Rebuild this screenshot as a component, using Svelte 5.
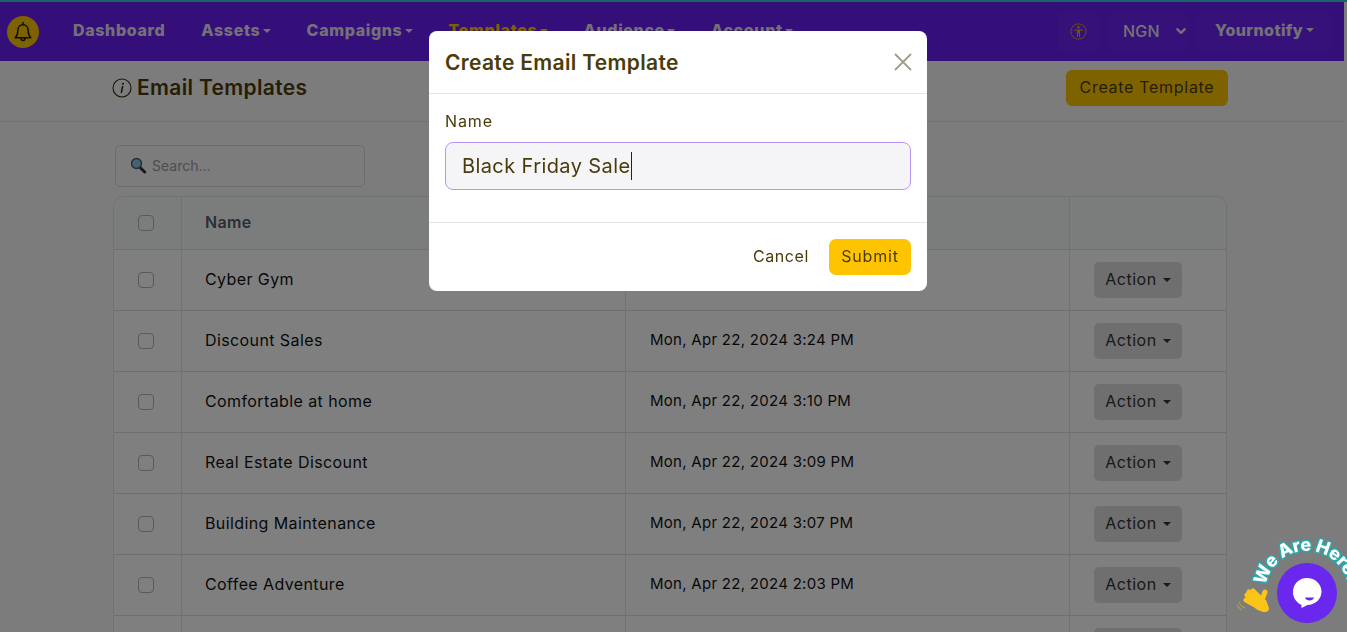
<script>
  const navItems = [
    { label: 'Dashboard', caret: false },
    { label: 'Assets', caret: true },
    { label: 'Campaigns', caret: true },
    { label: 'Templates', caret: true, active: true },
    { label: 'Audience', caret: true },
    { label: 'Account', caret: true }
  ];

  const templates = [
    { name: 'Cyber Gym', date: 'Mon, Apr 22, 2024 3:30 PM' },
    { name: 'Discount Sales', date: 'Mon, Apr 22, 2024 3:24 PM' },
    { name: 'Comfortable at home', date: 'Mon, Apr 22, 2024 3:10 PM' },
    { name: 'Real Estate Discount', date: 'Mon, Apr 22, 2024 3:09 PM' },
    { name: 'Building Maintenance', date: 'Mon, Apr 22, 2024 3:07 PM' },
    { name: 'Coffee Adventure', date: 'Mon, Apr 22, 2024 2:03 PM' },
    { name: 'Summer Deals', date: 'Mon, Apr 22, 2024 1:58 PM' }
  ];
</script>

<div class="page">
  <div class="topline"></div>
  <nav class="navbar">
    <div class="bell">
      <svg width="22" height="22" viewBox="0 0 24 24" fill="none" stroke="#1f1a08" stroke-width="1.6" stroke-linejoin="round" stroke-linecap="round">
        <path d="M12 1.500v2.600M12 4.100c-3.600 0-5.600 2.700-5.600 6 0 4.600-1 6.400-2.900 8.200h17c-1.900-1.800-2.900-3.600-2.900-8.200 0-3.300-2-6-5.600-6z" />
        <path d="M9.800 18.500c0 1.500 1 2.700 2.200 2.700s2.200-1.200 2.200-2.700" />
      </svg>
    </div>
    <ul class="menu">
      {#each navItems as item}
        <li class:active={item.active}>
          {item.label}
          {#if item.caret}<span class="caret"></span>{/if}
        </li>
      {/each}
    </ul>
    <div class="nav-right">
      <div class="chip access">
        <svg width="17" height="17" viewBox="0 0 24 24" fill="none" stroke="#e0ac00" stroke-width="1.300">
          <circle cx="12" cy="12" r="10.800" />
          <circle cx="12" cy="6" r="1.800" fill="#e0ac00" stroke="none" />
          <path d="M5.500 9h13v1.600h-4.300v9h-1.500v-4.800h-1.400v4.800H9.800v-9H5.500z" fill="#e0ac00" stroke="none" />
        </svg>
      </div>
      <div class="chip currency">
        NGN
        <svg width="12" height="12" viewBox="0 0 16 16" fill="none" stroke="#e6e3ef" stroke-width="3" stroke-linecap="round" stroke-linejoin="round">
          <path d="M3 5.500l5 5 5-5" />
        </svg>
      </div>
      <div class="chip account">Yournotify <span class="caret"></span></div>
    </div>
  </nav>

  <header class="subhead">
    <h1>
      <svg width="20" height="20" viewBox="0 0 20 20" fill="none" stroke="#2e2508" stroke-width="1.100">
        <circle cx="10" cy="10" r="9" />
        <path d="M10.600 8.500l-1.200 5.800" stroke-width="1.500" stroke-linecap="round" />
        <circle cx="11" cy="5.800" r="1" fill="#2e2508" stroke="none" />
      </svg>
      Email Templates
    </h1>
    <button class="create">Create Template</button>
  </header>

  <section class="content">
    <div class="search">
      <svg width="17" height="17" viewBox="0 0 17 17">
        <path d="M9.500 10l5.200 5" stroke="#333" stroke-width="3" stroke-linecap="round" />
        <circle cx="6.500" cy="6.500" r="5" fill="#8fc0e4" stroke="#4d5a66" stroke-width="1.400" />
      </svg>
      <span>Search...</span>
    </div>

    <div class="table">
      <div class="row head">
        <div class="cell check"><span class="box"></span></div>
        <div class="cell name">Name</div>
        <div class="cell date">Date</div>
        <div class="cell action"></div>
      </div>
      {#each templates as t}
        <div class="row">
          <div class="cell check"><span class="box"></span></div>
          <div class="cell name">{t.name}</div>
          <div class="cell date">{t.date}</div>
          <div class="cell action">
            <button class="action-btn">Action <span class="caret"></span></button>
          </div>
        </div>
      {/each}
    </div>
  </section>
</div>

<div class="backdrop"></div>

<div class="modal">
  <div class="modal-head">
    <h2>Create Email Template</h2>
    <svg class="close" width="18" height="18" viewBox="0 0 18 18" stroke="#a29d88" stroke-width="1.800" stroke-linecap="round">
      <path d="M1.500 1.500l15 15M16.500 1.500l-15 15" />
    </svg>
  </div>
  <div class="modal-body">
    <div class="label">Name</div>
    <div class="input">Black Friday Sale<span class="cursor"></span></div>
  </div>
  <div class="modal-foot">
    <button class="cancel">Cancel</button>
    <button class="submit">Submit</button>
  </div>
</div>

<div class="widget">
  <svg class="arc" width="120" height="107" viewBox="0 0 120 107">
    <defs>
      <path id="arc" d="M38.600 60.700A42 42 0 0 1 122 68" />
    </defs>
    <text class="arc-text"><textPath href="#arc">We Are Here!</textPath></text>
  </svg>
  <svg class="hand" width="40" height="30" viewBox="0 0 40 30">
    <g fill="none" stroke="#fcc419" stroke-width="5" stroke-linecap="round">
      <path d="M12 10l10 7M11 15l9 5M14 7l9 7M18 6l7 7M30 7l-3 8" />
    </g>
    <path d="M16 17l9-5 6 3 3 8c0 3-2 4-4 4-3 0-8-2-10-4z" fill="#fcc419" />
    <path d="M4 17c1 3 3 5 6 6M2 20c1 2 3 4 5 5" fill="none" stroke="#c9a93a" stroke-width="1" />
  </svg>
  <div class="bubble">
    <svg width="30" height="32" viewBox="0 0 30 32">
      <path d="M15 1C6.800 1 1 7.300 1 15c0 5.800 3.400 10.700 8.400 12.800L9.500 31l6-3c8-.2 14-6 14-13.500C29.500 7 23 1 15 1z" fill="#fff" />
      <path d="M13 20.500h9c-.6 2-2.300 3-4.500 3s-3.900-1-4.500-3z" fill="#6a27ee" />
    </svg>
  </div>
</div>

<style>
  :global(body) {
    height: 632px;
    overflow: hidden;
    background: #f9f9f9;
    font-family: Inter, "Open Sans", sans-serif;
  }

  .page {
    width: 1344px;
    color: #111;
    font-size: 16px;
    letter-spacing: 0.4px;
  }

  .topline {
    height: 2px;
    width: 1347px;
    background: #30c8cc;
  }

  .navbar {
    height: 59px;
    background: #6a1ef2;
    display: flex;
    align-items: center;
    padding-left: 7px;
    box-sizing: border-box;
    padding-bottom: 3px;
  }

  .bell {
    width: 32px;
    height: 32px;
    margin-top: 3px;
    border-radius: 50%;
    background: #ffc400;
    display: flex;
    align-items: center;
    justify-content: center;
  }

  .menu {
    display: flex;
    gap: 36px;
    list-style: none;
    margin: 0 0 0 34px;
    padding: 0;
    font-size: 16px;
    font-weight: 800;
    letter-spacing: 0.65px;
  }

  .menu li {
    color: #e6e3ef;
    white-space: nowrap;
  }

  .menu li.active {
    color: #ffc400;
  }

  .menu .caret {
    margin-left: -2px;
  }

  .caret {
    display: inline-block;
    vertical-align: 3px;
    margin-left: 1px;
    border-top: 4px solid currentColor;
    border-left: 4px solid transparent;
    border-right: 4px solid transparent;
  }

  .nav-right {
    margin-left: auto;
    margin-top: 3px;
    display: flex;
    align-items: center;
    gap: 8px;
    padding-right: 11px;
    height: 40px;
  }

  .chip {
    height: 40px;
    display: flex;
    align-items: center;
    border-radius: 6px;
    background: #6c22f3;
    color: #e6e3ef;
    white-space: nowrap;
  }

  .access {
    width: 41px;
    justify-content: center;
  }

  .currency {
    width: 82px;
    padding: 0 0 2px 16px;
    box-sizing: border-box;
    gap: 15px;
    font-weight: 500;
    font-size: 16px;
    letter-spacing: 0.2px;
  }

  .account {
    width: 136px;
    padding: 0 0 4px 18px;
    box-sizing: border-box;
    gap: 2px;
    font-size: 16px;
    font-weight: 800;
  }

  .subhead {
    height: 61px;
    border-bottom: 1px solid #e4e4e4;
    display: flex;
    align-items: center;
    justify-content: space-between;
    padding: 0 116px 7px 112px;
    box-sizing: border-box;
  }

  h1 {
    display: flex;
    align-items: center;
    gap: 5px;
    margin: 0;
    font-size: 21px;
    font-weight: 600;
    letter-spacing: 0.33px;
    color: #4a3c0a;
  }

  .create {
    width: 162px;
    height: 36px;
    border: 0;
    border-radius: 6px;
    padding: 0 0 2px;
    background: #ffc400;
    color: #4a3c0a;
    font: 400 16px Inter, sans-serif;
    letter-spacing: 0.7px;
  }

  .content {
    padding: 23px 117px 0 113px;
  }

  .search {
    width: 250px;
    height: 42px;
    margin-left: 2px;
    box-sizing: border-box;
    border: 1px solid #d8d8d8;
    border-radius: 5px;
    display: flex;
    align-items: center;
    gap: 5px;
    padding: 0 0 2px 14px;
    color: #9a9a9a;
    font-size: 14px;
    letter-spacing: 0;
  }

  .table {
    margin-top: 9px;
    border: 1px solid #e4e4e4;
    border-bottom: 0;
    border-radius: 10px 10px 0 0;
    background: #fff;
  }

  .row {
    display: grid;
    grid-template-columns: 68px 444px 444px 1fr;
    height: 61px;
    border-bottom: 1px solid #dedede;
    box-sizing: border-box;
  }

  .row.head {
    height: 53px;
    background: #f6fbfa;
    border-radius: 10px 10px 0 0;
    color: #585d6c;
    font-weight: 600;
    letter-spacing: 0.3px;
  }

  .cell {
    display: flex;
    align-items: center;
    border-right: 1px solid #e4e4e4;
    padding-left: 23px;
    padding-bottom: 3px;
  }

  .cell.check {
    justify-content: center;
    padding: 0 4px 0 0;
  }

  .cell.date {
    font-size: 15px;
    letter-spacing: 0.28px;
    padding-left: 24px;
  }

  .cell.action {
    border-right: 0;
    padding: 0 0 0 24px;
  }

  .box {
    width: 16px;
    height: 16px;
    box-sizing: border-box;
    border: 1px solid #b4b4b4;
    border-radius: 4px;
  }

  .action-btn {
    width: 88px;
    height: 36px;
    border: 0;
    border-radius: 5px;
    padding: 0 0 2px;
    background: #dedede;
    color: #333;
    font: 400 16px Inter, sans-serif;
    letter-spacing: 0.5px;
  }

  .backdrop {
    position: fixed;
    inset: 0;
    background: rgba(0, 0, 0, 0.5);
  }

  .modal {
    position: fixed;
    left: 429px;
    top: 31px;
    width: 498px;
    height: 260px;
    background: #fff;
    border-radius: 8px;
    color: #4a3c0a;
    display: flex;
    flex-direction: column;
  }

  .modal-head {
    height: 63px;
    box-sizing: border-box;
    border-bottom: 1px solid #e4e4e8;
    display: flex;
    align-items: center;
    justify-content: space-between;
    padding: 0 15px 0 16px;
  }

  h2 {
    margin: 0;
    font-size: 21px;
    font-weight: 600;
    letter-spacing: 0.33px;
  }

  .modal-body {
    height: 129px;
    box-sizing: border-box;
    padding: 17px 16px 0;
    border-bottom: 1px solid #e4e4e8;
  }

  .label {
    font-size: 16px;
    line-height: 20px;
    margin-bottom: 11px;
    letter-spacing: 0.9px;
  }

  .input {
    height: 48px;
    box-sizing: border-box;
    border: 1px solid #b694f8;
    border-radius: 8px;
    background: #f5f5f8;
    display: flex;
    align-items: center;
    padding-left: 16px;
    font-size: 20px;
    letter-spacing: 0.4px;
  }

  .cursor {
    width: 1px;
    height: 28px;
    background: #222;
  }

  .modal-foot {
    flex: 1;
    display: flex;
    align-items: center;
    justify-content: flex-end;
    gap: 14px;
    padding-right: 16px;
  }

  .cancel,
  .submit {
    height: 36px;
    border: 0;
    border-radius: 7px;
    padding: 0 6px 2px;
    color: #4a3c0a;
    font: 400 16px Inter, sans-serif;
  }

  .cancel {
    background: none;
    letter-spacing: 0.6px;
  }

  .submit {
    width: 82px;
    background: #ffc400;
    letter-spacing: 0.8px;
  }

  .widget {
    position: fixed;
    left: 1227px;
    top: 525px;
    width: 120px;
    height: 107px;
    overflow: hidden;
  }

  .arc {
    position: absolute;
    left: 0;
    top: 0;
  }

  .arc-text {
    font: 800 18px Inter, sans-serif;
    letter-spacing: -0.3px;
    fill: #fff;
    stroke: #2aa8ad;
    stroke-width: 3px;
    paint-order: stroke;
  }

  .hand {
    position: absolute;
    left: 8px;
    top: 60px;
  }

  .bubble {
    position: absolute;
    left: 50px;
    top: 38px;
    width: 60px;
    height: 60px;
    border-radius: 50%;
    background: #6a27ee;
    display: flex;
    align-items: center;
    justify-content: center;
  }
</style>
